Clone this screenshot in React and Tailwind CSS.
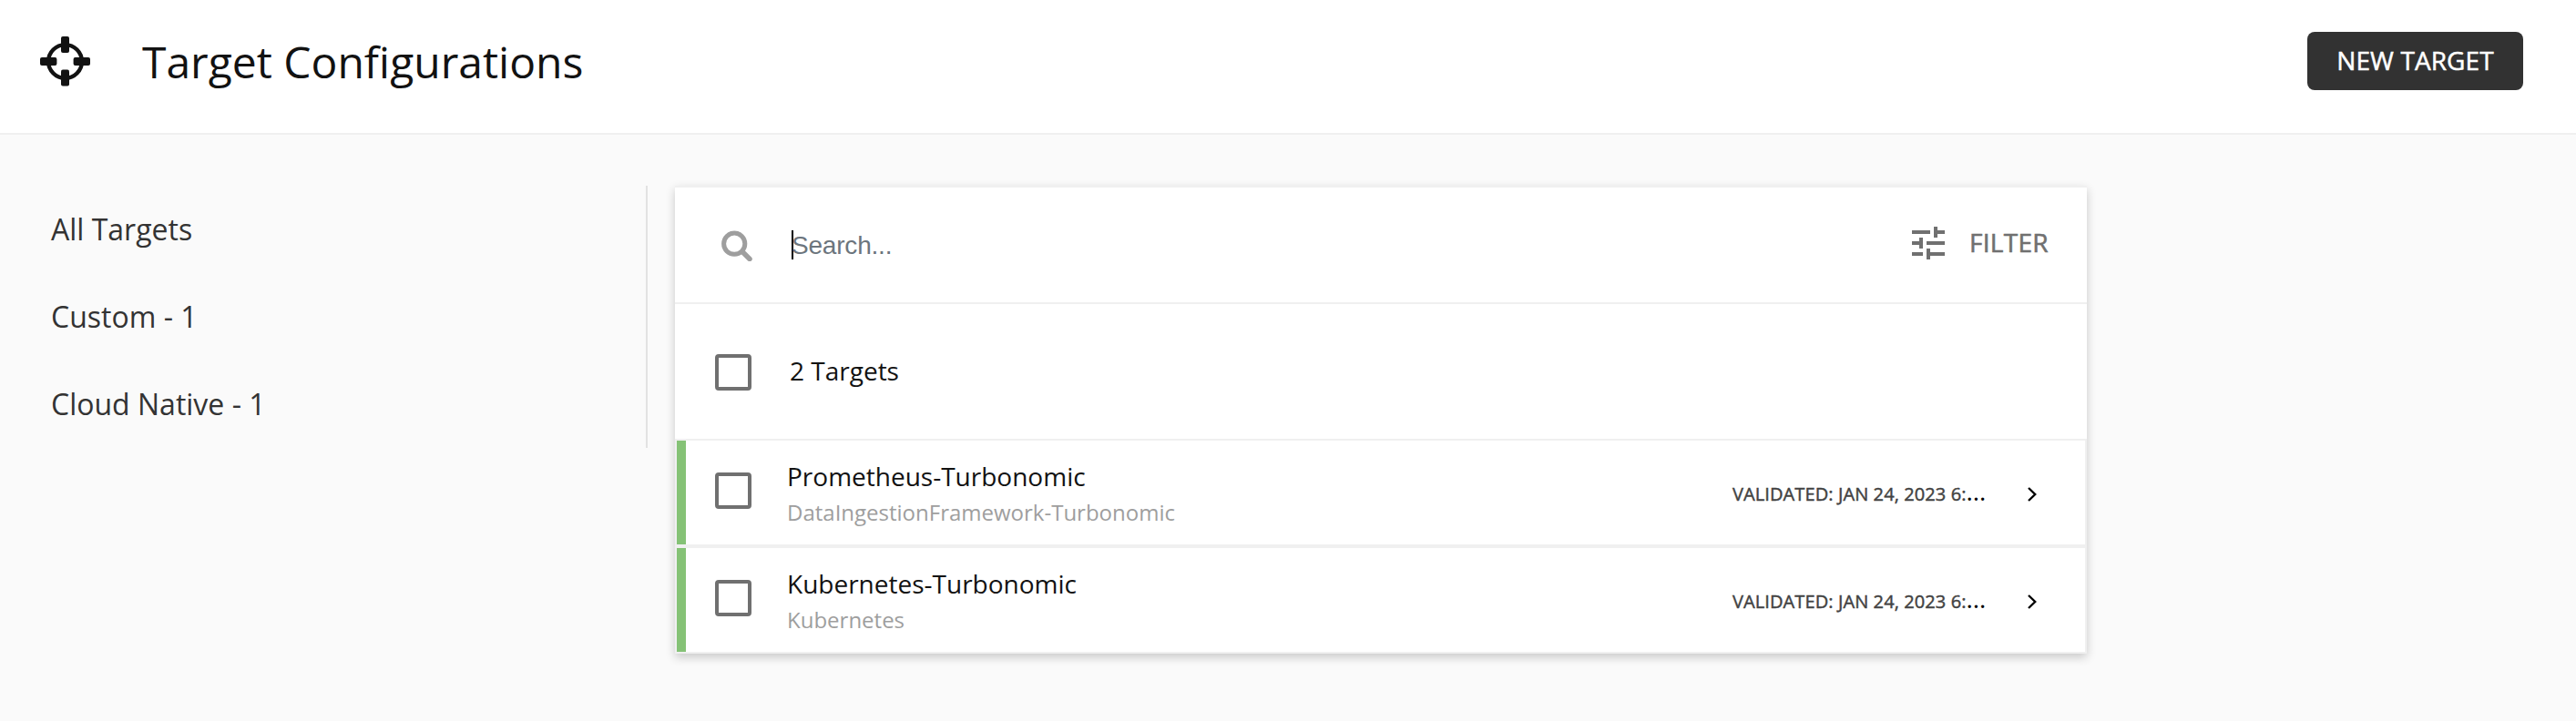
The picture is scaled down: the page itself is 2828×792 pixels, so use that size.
const rows = [
  { name: "Prometheus-Turbonomic", type: "DataIngestionFramework-Turbonomic" },
  { name: "Kubernetes-Turbonomic", type: "Kubernetes" },
];

function Checkbox() {
  return <span className="block size-10 shrink-0 rounded-[4px] border-4 border-[#707070]" />;
}

function TargetIcon() {
  return (
    <svg className="size-[56px] shrink-0" viewBox="0 0 56 56" fill="#121212">
      <circle cx="27.5" cy="28.5" r="18.4" fill="none" stroke="#121212" strokeWidth="4.4" />
      <rect x="23" y="1" width="9" height="18" rx="2" />
      <rect x="23" y="37.6" width="9" height="18" rx="2" />
      <rect x="0" y="24" width="18.4" height="9" rx="2" />
      <rect x="36.6" y="24" width="18.4" height="9" rx="2" />
    </svg>
  );
}

function Row({ name, type }) {
  return (
    <div className="flex h-[114px] border-x-2 border-[#f0f0f0] box-border">
      <div className="w-[10px] bg-[#85c276]" />
      <div className="pl-8 pt-[35px]">
        <Checkbox />
      </div>
      <div className="flex-1 pl-[39px] pt-[20px]">
        <div className="text-[28px] leading-[38px] text-[#121212]">{name}</div>
        <div className="mt-[4px] text-[24px] leading-[33px] text-[#9e9e9e]">{type}</div>
      </div>
      <div className="flex w-[387px] items-start pt-[40px]">
        <div className="w-[324px] whitespace-nowrap leading-[30px]">
          <span className="text-[20px] tracking-[0.1px] text-[#424242] [-webkit-text-stroke:0.45px_#424242]">VALIDATED: JAN 24, 2023 6:</span>
          <span className="text-[28px] text-black">…</span>
        </div>
        <svg className="mt-[11px] h-4 w-[10px]" viewBox="0 0 10 16" fill="none" stroke="#000" strokeWidth="2.4">
          <path d="M1 1L8.2 8L1 15" />
        </svg>
      </div>
    </div>
  );
}

export default function App() {
  return (
    <div className="h-[792px] w-[2828px] overflow-hidden bg-[#fafafa] font-['Open_Sans',sans-serif]">
      <header className="flex h-[148px] border-b-2 border-[#f0f0f0] bg-white pl-11 pr-[58px]">
        <div className="pt-[39px]">
          <TargetIcon />
        </div>
        <h1 className="flex-1 pl-[56px] pt-[36px] text-[48px] leading-[64px] text-[#121212]">Target Configurations</h1>
        <button className="mt-[35px] h-16 w-[237px] rounded-lg bg-[#323232] pb-[2px] text-[28px] leading-[62px] tracking-[0.1px] text-white [-webkit-text-stroke:0.5px_#fff]">
          NEW TARGET
        </button>
      </header>
      <div className="flex pt-14">
        <nav className="h-72 w-[711px] border-r-2 border-[#e2e2e2] pl-14 text-[32px] leading-[96px] text-[#333]">
          <div>All Targets</div>
          <div>Custom - 1</div>
          <div>Cloud Native - 1</div>
        </nav>
        <main className="ml-[30px] w-[1550px] bg-white shadow-[0_4px_10px_rgba(0,0,0,0.2)]">
          <div className="flex h-[130px] border-y-2 border-[#f0f0f0]">
            <svg className="ml-[51px] mt-[47px] size-[34px]" viewBox="0 0 34 34" fill="none" stroke="#9e9e9e">
              <circle cx="14.2" cy="14.7" r="11.6" strokeWidth="5" />
              <path d="M23 23.5L31 31.5" strokeWidth="5.4" strokeLinecap="round" />
            </svg>
            <div className="ml-[43px] mt-[47px] h-8 w-[2px] bg-black" />
            <div className="-ml-[2px] mt-[48px] flex-1 font-['Liberation_Sans',sans-serif] text-[28px] leading-8 tracking-[-0.2px] text-[#6c757d]">
              Search...
            </div>
            <svg className="mt-[37px] size-12" viewBox="0 0 24 24" fill="#707070">
              <path d="M3 17v2h6v-2H3zM3 5v2h10V5H3zm10 16v-2h8v-2h-8v-2h-2v6h2zM7 9v2H3v2h4v2h2V9H7zm14 4v-2H11v2h10zm-6-4h2V7h4V5h-4V3h-2v6z" />
            </svg>
            <div className="ml-[21px] mt-[41px] w-[129px] text-[28px] leading-[38px] tracking-[0.3px] text-[#707070] [-webkit-text-stroke:0.6px_#707070]">FILTER</div>
          </div>
          <div className="flex h-[150px] border-b-2 border-[#f0f0f0] pl-11 pt-[55px]">
            <Checkbox />
            <div className="-mt-px pl-[42px] text-[28px] leading-[38px] text-[#121212]">2 Targets</div>
          </div>
          <Row {...rows[0]} />
          <div className="h-1 bg-[#f0f0f0]" />
          <Row {...rows[1]} />
          <div className="h-[2px] bg-[#f0f0f0]" />
        </main>
      </div>
    </div>
  );
}
